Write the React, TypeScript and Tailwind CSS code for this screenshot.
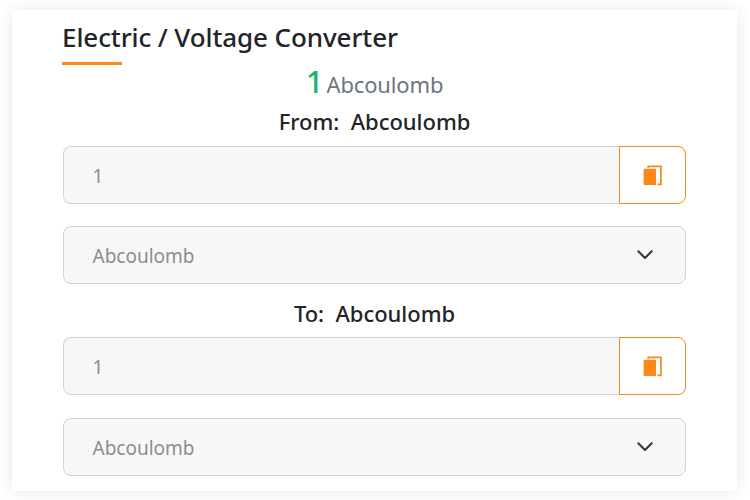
import React from "react";

function CopyIcon() {
  return (
    <svg width="20" height="22" viewBox="0 0 20 22" className="mt-[2px] block">
      <rect x="0.6" y="3.8" width="12.4" height="16.2" rx="1" fill="#fd8719" />
      <path d="M5.2 3V1.3H17.9V19.3H14.4" fill="none" stroke="#fd8719" strokeWidth="1.7" />
    </svg>
  );
}

function Chevron() {
  return (
    <svg width="16" height="10" viewBox="0 0 16 10" className="block">
      <path d="M1.3 1.3L8 8L14.7 1.3" fill="none" stroke="#343a40" strokeWidth="2.1" strokeLinecap="round" strokeLinejoin="round" />
    </svg>
  );
}

function ValueField({ label }: { label: string }) {
  return (
    <div className="flex h-[58px] w-[623px]">
      <input
        aria-label={label}
        defaultValue="1"
        className="h-full w-[556px] rounded-l-lg border border-r-0 border-[#ced4da] bg-[#f7f7f7] pl-[28.5px] pt-[2px] text-[19px] text-[#868e96] outline-none"
      />
      <button
        aria-label="Copy"
        className="flex h-full w-[67px] items-center justify-center rounded-r-lg border border-[#fd8719] bg-white"
      >
        <CopyIcon />
      </button>
    </div>
  );
}

function UnitSelect() {
  return (
    <button className="flex h-[58px] w-[623px] items-center justify-between rounded-lg border border-[#ced4da] bg-[#f7f7f7] pl-[28.5px] pr-8 text-[19px] text-[#868e96]">
      <span className="pt-[3px]">Abcoulomb</span>
      <Chevron />
    </button>
  );
}

export default function App() {
  return (
    <div className="h-[500px] w-[750px] overflow-hidden bg-white pl-3 pt-[10px] font-['Noto_Sans','Open_Sans',sans-serif]">
      <main className="h-[481px] w-[725px] bg-white pl-[51px] pt-[10px] shadow-[0_0_14px_rgba(33,37,41,0.11)]">
        <div className="-ml-px h-[45px] w-[625px]">
          <h1 className="h-[42px] whitespace-nowrap text-[26px] font-medium leading-[34px] tracking-[-0.1px] text-[#212529]">
            Electric / Voltage Converter
          </h1>
          <div className="h-[3px] w-[60px] bg-[#fd8719]" />
        </div>
        <div className="flex h-9 w-[623px] items-baseline justify-center whitespace-nowrap leading-8">
          <span className="text-[31px] font-medium text-[#13b76d]">1</span>
          <span className="ml-[3px] text-[22px] tracking-[-0.15px] text-[#6c757d]">Abcoulomb</span>
        </div>
        <h2 className="h-[45px] w-[623px] whitespace-pre pt-[3px] text-center text-[22px] font-medium leading-[34px] tracking-[-0.03px] text-[#212529]">
          {"From:  Abcoulomb"}
        </h2>
        <ValueField label="From value" />
        <div className="h-[22px]" />
        <UnitSelect />
        <h2 className="h-[53px] w-[623px] whitespace-pre pt-3 text-center text-[22px] font-medium leading-[34px] tracking-[-0.03px] text-[#212529]">
          {"To:  Abcoulomb"}
        </h2>
        <ValueField label="To value" />
        <div className="h-[23px]" />
        <UnitSelect />
      </main>
    </div>
  );
}
